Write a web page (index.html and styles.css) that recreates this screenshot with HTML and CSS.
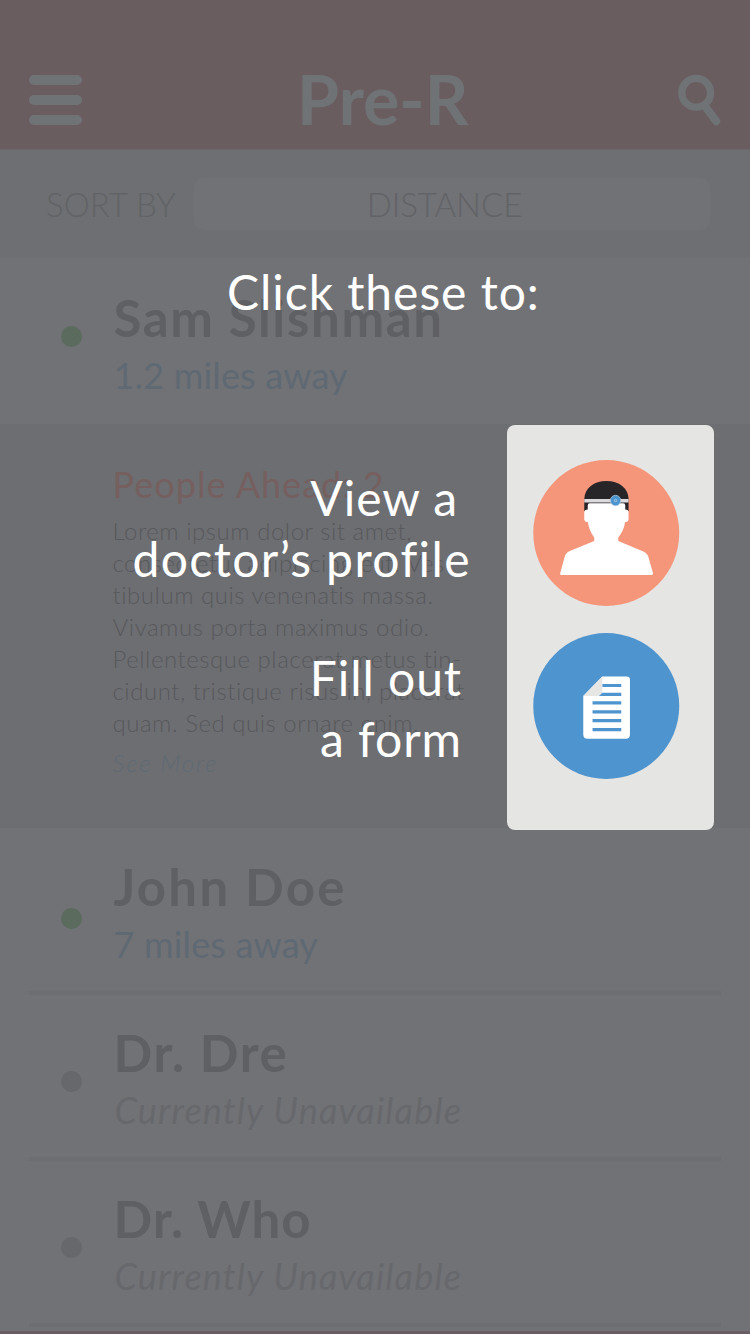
FILE: index.html
```html
<!DOCTYPE html>
<html lang="en">
<head>
<meta charset="utf-8">
<title>Pre-R</title>
<link rel="stylesheet" href="styles.css">
</head>
<body>
<div class="screen">
  <header class="header">
    <div class="menu"><i></i><i></i><i></i></div>
    <h1 class="brand">Pre-R</h1>
    <svg class="search" viewBox="0 0 46 54"><circle cx="20.2" cy="19.8" r="14.4" fill="none" stroke="currentColor" stroke-width="7.3"/><path d="M28.5 32.5 40.2 48.2" stroke="currentColor" stroke-width="8" stroke-linecap="round"/></svg>
  </header>
  <div class="sort">
    <span class="sort-label">SORT BY</span>
    <div class="sort-value"><span>DISTANCE</span></div>
  </div>
  <main class="list">
    <section class="row first">
      <i class="dot on"></i>
      <div><h2 class="name sam">Sam Slishman</h2><p class="miles">1.2 miles away</p></div>
    </section>
    <section class="detail">
      <h3 class="ahead">People Ahead: 2</h3>
      <p class="bio">Lorem ipsum dolor sit amet,<br>consectetur adipiscing elit. Ves-<br>tibulum quis venenatis massa.<br>Vivamus porta maximus odio.<br>Pellentesque placerat metus tin-<br>cidunt, tristique risus in, placerat<br>quam. Sed quis ornare enim.</p>
      <p class="more">See More</p>
    </section>
    <section class="row ruled">
      <i class="dot on"></i>
      <div><h2 class="name john">John Doe</h2><p class="miles">7 miles away</p></div>
    </section>
    <section class="row ruled">
      <i class="dot"></i>
      <div><h2 class="name dre">Dr. Dre</h2><p class="away">Currently Unavailable</p></div>
    </section>
    <section class="row ruled">
      <i class="dot"></i>
      <div><h2 class="name who">Dr. Who</h2><p class="away">Currently Unavailable</p></div>
    </section>
  </main>
  <div class="coach">
    <p class="lead">Click these to:</p>
    <div class="coach-body">
      <div class="hints">
        <p class="hint view"><span class="short">View a</span><br><span class="long">doctor’s profile</span></p>
        <p class="hint fill">Fill out<br>a form</p>
      </div>
      <div class="panel">
        <svg class="action" viewBox="533 460 146 146">
          <circle cx="606" cy="533" r="73" fill="#f5967a"/>
          <path d="M584 511V499C584.500 488 593.500 481 606.200 481S628 488 628.300 499V511Z" fill="#272528"/>
          <path d="M584 499H628.300V502.400H584Z" fill="#dbd9db"/>
          <path d="M589.500 503.300H623Q625 503.300 625 505.500V509.500Q628.300 509.500 628.300 512.500V519Q628.300 522 624.700 522.300Q624 530 618 537.500V541L642 551Q646.500 552.700 648 556.500L652.700 573Q653 575 651.500 575H561Q559.500 575 560 573L564.500 556.500Q565.500 552.700 569.500 551L594 541V537.500Q588.500 530 587.700 522.300Q584 522 584 519V512.500Q584 509.500 587.500 509.500V505.500Q587.500 503.300 589.500 503.300Z" fill="#fff"/>
          <circle cx="615.300" cy="500.500" r="5.200" fill="#4c94d0" stroke="#b9cfe0" stroke-width=".7"/>
          <circle cx="615.300" cy="500.500" r="1.200" fill="none" stroke="#bcd6eb" stroke-width=".8"/>
        </svg>
        <svg class="action" viewBox="533 633 146 146">
          <circle cx="606" cy="706" r="73" fill="#4e94cf"/>
          <path d="M602 676.500H626.500Q629.700 676.500 629.700 679.700V734.500Q629.700 738.700 625.500 738.700H587.500Q583 738.700 583 734.500V696Z" fill="#fff"/>
          <path d="M602 684H621V687H602ZM599 692.700H621V695.900H599ZM592.300 701.300H621V704.500H592.300ZM592.300 710.200H621V713.400H592.300ZM592.300 719H621V722.200H592.300ZM592.300 728H621V731.200H592.300Z" fill="#4e94cf"/>
          <path d="M602 676.500V691.500Q602 694 598 696H583Z" fill="#e6e6e5"/>
        </svg>
      </div>
    </div>
  </div>
</div>
</body>
</html>
```

FILE: styles.css
```css
* { box-sizing: border-box; margin: 0; padding: 0; }
body { font-family: Lato, "Liberation Sans", sans-serif; background: #717276; }
.screen { position: relative; width: 750px; height: 1334px; overflow: hidden; background: #717276; border-bottom: 3px solid #6a5d64; }

.header { height: 150px; background: #6a5d60; border-bottom: 1px solid #68666a; color: #707376; display: flex; justify-content: space-between; align-items: flex-start; padding: 72px 28px 0 28.500px; }
.menu { width: 53px; padding-top: 2.500px; display: flex; flex-direction: column; gap: 10px; }
.menu i { height: 10px; border-radius: 5px; background: #707376; }
.brand { font-size: 68px; line-height: 68px; margin: -7px 0 0 8px; }
.search { width: 46px; height: 54px; margin-top: 1px; }

.sort { height: 108px; background: #6d6f72; padding: 28px 40px 0 46px; display: flex; justify-content: space-between; color: #626366; font-weight: 300; font-size: 33px; line-height: 52px; }
.sort-label { white-space: nowrap; }
.sort-value { width: 516px; height: 52px; border-radius: 10px; background: #717276; text-align: center; }
.sort-value span { margin-right: 15px; letter-spacing: -.1px; }

.row { height: 166px; padding: 28.500px 28px 0 60.500px; display: flex; position: relative; }
.row.first { padding-top: 30px; }
.dot { width: 21px; height: 21px; border-radius: 50%; background: #67686b; margin: 48px 32px 0 0; flex: none; }
.first .dot { margin-top: 37.500px; }
.dot.on { background: #5b6b5e; }
.row.ruled .dot.on { margin-top: 51px; }
.ruled::after { content: ""; position: absolute; left: 29px; right: 29px; bottom: -1px; height: 4px; background: #6d6e72; }
.name { font-size: 51px; line-height: 60px; font-weight: 700; color: #5f6064; white-space: nowrap; }
.sam { letter-spacing: 1.650px; }
.john { letter-spacing: 2.250px; }
.dre { letter-spacing: 1.600px; }
.who { letter-spacing: 1.050px; }
.miles, .away { font-size: 36px; line-height: 54px; color: #5f6973; white-space: nowrap; letter-spacing: .170px; }
.away { font-style: italic; color: #67686c; margin-left: 1px; letter-spacing: 1.180px; }

.detail { height: 404px; background: #6d6e72; padding: 36px 0 0 112.500px; }
.ahead { font-size: 36px; line-height: 48px; font-weight: 400; color: #755f5f; letter-spacing: 1.050px; }
.bio { font-size: 24px; line-height: 32px; font-weight: 300; color: #58595c; margin-top: 7px; white-space: nowrap; letter-spacing: .530px; }
.more { font-size: 24px; line-height: 32px; font-weight: 300; font-style: italic; color: #606a73; margin-top: 8px; letter-spacing: 1.850px; }

.coach { position: absolute; inset: 0; color: #fff; padding-top: 261px; font-size: 48px; line-height: 61px; white-space: nowrap; letter-spacing: .950px; }
.lead { height: 164px; padding-left: 227px; }
.coach-body { display: flex; justify-content: space-between; padding-right: 36px; }
.hints { width: 471px; text-align: right; }
.hint.view { margin-top: 42px; }
.short { margin-right: 13px; }
.long { letter-spacing: 1.400px; }
.hint.fill { margin: 58px 9px 0 0; }
.panel { width: 207px; height: 405px; background: #e5e5e3; border-radius: 8px; padding: 35px 0 0 26px; display: flex; flex-direction: column; gap: 26.500px; }
.action { width: 146.500px; height: 146px; flex: none; }
```
